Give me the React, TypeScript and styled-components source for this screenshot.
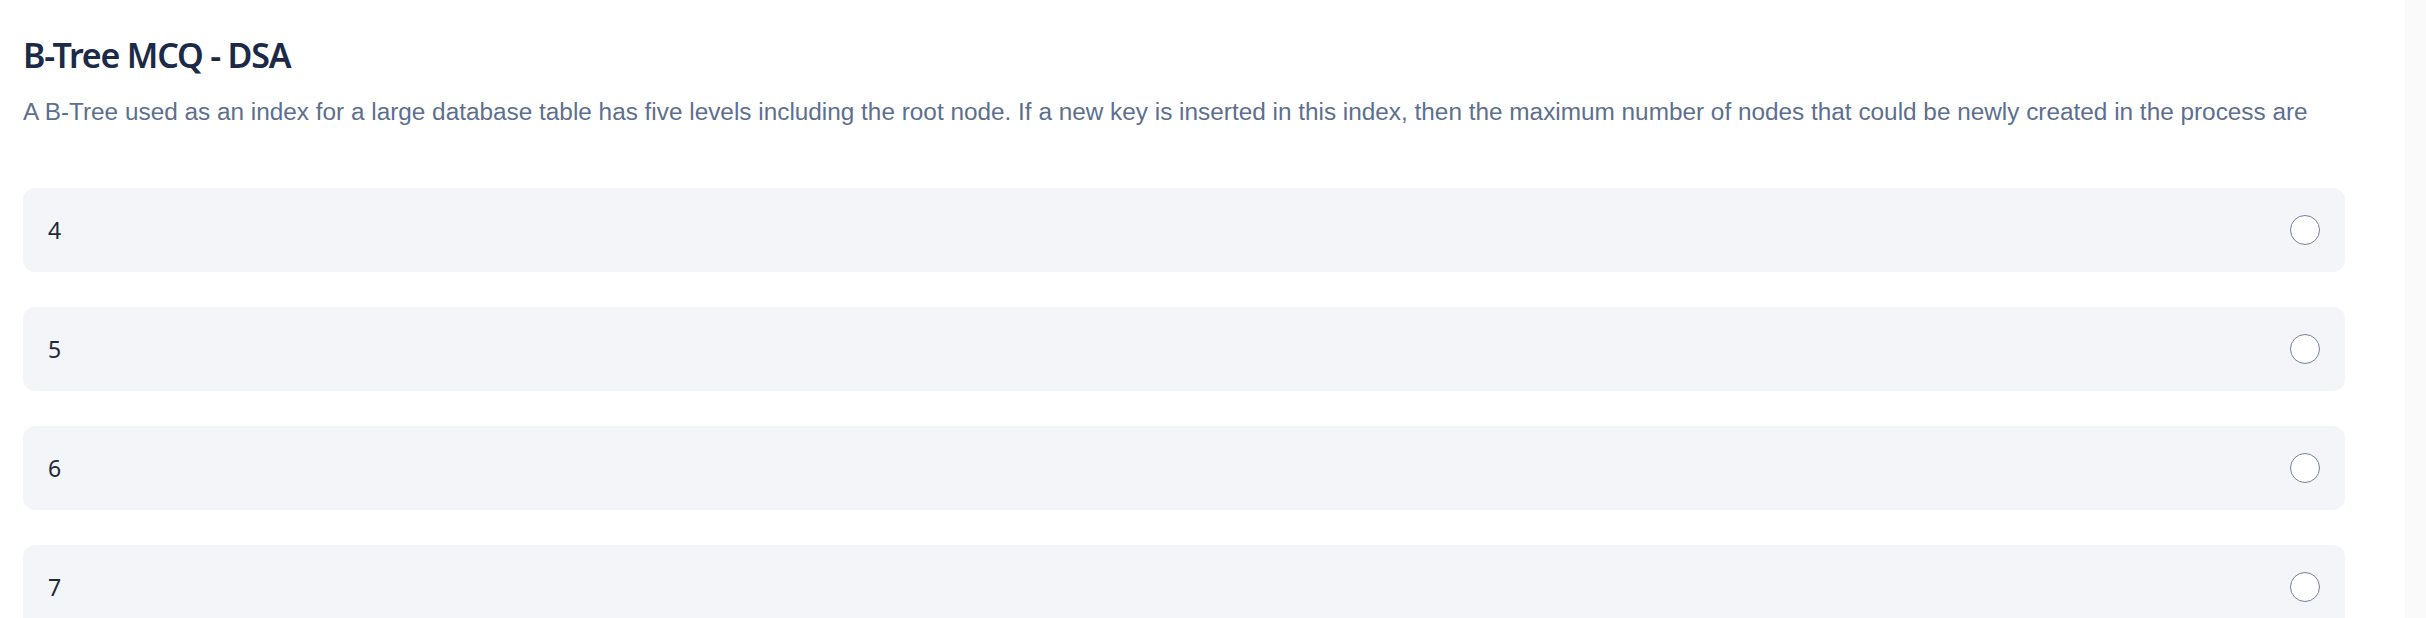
import React from "react";
import styled, { createGlobalStyle } from "styled-components";

const Global = createGlobalStyle`
  html, body { margin: 0; padding: 0; background: #ffffff; }
  body { font-family: "Noto Sans", "Open Sans", sans-serif; }
`;

const Page = styled.div`
  display: grid;
  grid-template-columns: 1fr 21px;
  height: 618px;
  overflow: hidden;
`;

const Main = styled.main`
  padding: 31px 60px 0 23px;
  display: flex;
  flex-direction: column;
`;

const Track = styled.aside`
  background: #fafafa;
`;

const Title = styled.h1`
  margin: 0;
  font-family: "Noto Sans", sans-serif;
  font-weight: 600;
  font-size: 34px;
  line-height: 48px;
  color: #1b2a47;
  letter-spacing: -1.2px;
`;

const Description = styled.p`
  margin: 15px 0 0 0;
  font-family: "Liberation Sans", Arial, sans-serif;
  font-size: 24.35px;
  line-height: 36px;
  color: #5d6f8f;
  white-space: nowrap;
`;

const Options = styled.div`
  margin-top: 58px;
  display: flex;
  flex-direction: column;
  gap: 35px;
`;

const Option = styled.label`
  display: flex;
  align-items: center;
  justify-content: space-between;
  height: 84px;
  padding: 0 25px;
  background: #f3f5f9;
  border-radius: 12px;
  box-sizing: border-box;
  cursor: pointer;
`;

const OptionText = styled.span`
  font-family: "Noto Sans", sans-serif;
  font-size: 23px;
  color: #1e293b;
`;

const Radio = styled.span`
  width: 30px;
  height: 30px;
  border-radius: 50%;
  border: 1.5px solid #74819c;
  background: #ffffff;
  box-sizing: border-box;
`;

const options = ["4", "5", "6", "7"];

export default function App() {
  return (
    <>
      <Global />
      <Page>
        <Main>
          <Title>B-Tree MCQ - DSA</Title>
          <Description>
            A B-Tree used as an index for a large database table has five levels including the root node. If a new key is inserted in this index, then the maximum number of nodes that could be newly created in the process are
          </Description>
          <Options>
            {options.map((o) => (
              <Option key={o}>
                <OptionText>{o}</OptionText>
                <Radio />
              </Option>
            ))}
          </Options>
        </Main>
        <Track />
      </Page>
    </>
  );
}
